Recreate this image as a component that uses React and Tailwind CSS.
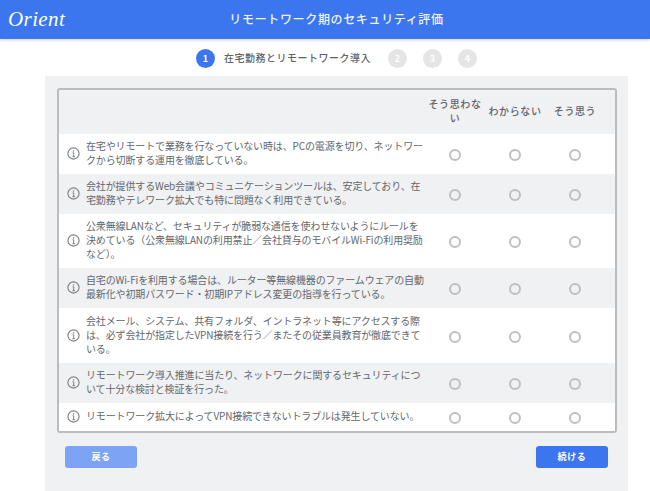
const FONT = "font-['Noto_Sans_CJK_JP','Noto_Sans',sans-serif]";
const rows = [
  { h: "h-[40px]", bg: "bg-white", t: "在宅やリモートで業務を行なっていない時は、PCの電源を切り、ネットワークから切断する運用を徹底している。" },
  { h: "h-[40px]", bg: "bg-[#f0f1f3]", t: "会社が提供するWeb会議やコミュニケーションツールは、安定しており、在宅勤務やテレワーク拡大でも特に問題なく利用できている。" },
  { h: "h-[54px]", bg: "bg-white", t: "公衆無線LANなど、セキュリティが脆弱な通信を使わせないようにルールを決めている（公衆無線LANの利用禁止／会社貸与のモバイルWi-Fiの利用奨励など）。" },
  { h: "h-[40px]", bg: "bg-[#f0f1f3]", t: "自宅のWi-Fiを利用する場合は、ルーター等無線機器のファームウェアの自動最新化や初期パスワード・初期IPアドレス変更の指導を行っている。" },
  { h: "h-[55px]", bg: "bg-white", t: "会社メール、システム、共有フォルダ、イントラネット等にアクセスする際は、必ず会社が指定したVPN接続を行う／またその従業員教育が徹底できている。" },
  { h: "h-[40px]", bg: "bg-[#f0f1f3]", t: "リモートワーク導入推進に当たり、ネットワークに関するセキュリティについて十分な検討と検証を行った。" },
  { h: "h-[28px]", bg: "bg-white", t: "リモートワーク拡大によってVPN接続できないトラブルは発生していない。" },
];

function Info() {
  return (
    <svg width="13" height="13" viewBox="0 0 13 13" fill="none" className="shrink-0 mb-[1px]">
      <circle cx="6.5" cy="6.5" r="5.6" stroke="#7a7e83" strokeWidth="1.1" />
      <path d="M5.6 5.8H6.7V9.6M5.4 9.7H8" stroke="#7a7e83" strokeWidth="1" />
      <circle cx="6.5" cy="3.9" r="0.75" fill="#7a7e83" />
    </svg>
  );
}

function Radio() {
  return <div className="w-[60px] flex justify-center pt-[2px]"><div className="w-3 h-3 rounded-full border-2 border-[#bfbfbf] bg-transparent" /></div>;
}

function Step({ n, active }) {
  return (
    <div className={`w-[19px] h-[19px] rounded-full flex items-center justify-center text-[9px] font-bold text-white ${active ? "bg-[#3b76ef]" : "bg-[#e5e5e5]"}`}>{n}</div>
  );
}

export default function App() {
  return (
    <div className={`${FONT} w-[650px] h-[491px] overflow-hidden bg-white flex flex-col`}>
      <header className="h-[39px] shrink-0 bg-[#3b76ef] shadow-[0_1px_3px_rgba(0,0,0,0.2)] relative flex items-center justify-center pl-[23px]">
        <span className="absolute left-[8px] top-[7px] font-['Liberation_Serif',serif] italic text-[21px] leading-[24px] tracking-[0.4px] text-white">Orient</span>
        <h1 className="mb-[2px] text-[12px] leading-[16px] font-medium tracking-[0.65px] text-[#eef3ff]">リモートワーク期のセキュリティ評価</h1>
      </header>
      <div className="h-[37px] shrink-0 flex items-center pl-[196px] pt-[2px]">
        <Step n="1" active />
        <span className="ml-[9px] mr-[17px] mb-[2px] text-[10px] leading-[14px] font-medium tracking-[0.5px] text-[#5f6368]">在宅勤務とリモートワーク導入</span>
        <div className="flex gap-[16px]"><Step n="2" /><Step n="3" /><Step n="4" /></div>
      </div>
      <main className="ml-[45px] w-[583px] flex-1 bg-[#f0f1f3] pt-[12px] px-[12px]">
        <div className="w-[560px] rounded-[3px] border-2 border-[#bcbcbc] overflow-hidden">
          <div className="h-[44px] flex items-center pl-[366px] pb-[2px] text-[10px] font-medium tracking-[0.6px] text-[#5f6368] text-center">
            <div className="w-[60px] leading-[14px]">そう思わない</div>
            <div className="w-[60px] leading-[14px]">わからない</div>
            <div className="w-[60px] leading-[14px]">そう思う</div>
          </div>
          {rows.map((r, i) => (
            <div key={i} className={`${r.h} ${r.bg} flex items-center`}>
              <div className="w-[366px] shrink-0 flex items-center pl-[8px]">
                <Info />
                <p className="ml-[6px] mb-[2px] w-[339px] text-[10px] leading-[14px] tracking-[-0.14px] text-[#63676c]">{r.t}</p>
              </div>
              <Radio /><Radio /><Radio />
            </div>
          ))}
        </div>
        <div className="flex justify-between mt-[13px] px-[8px]">
          <button className="w-[72px] h-[22px] rounded-[3px] bg-[#7ca3f4] text-white text-[9px] font-bold tracking-[0.6px]">戻る</button>
          <button className="w-[72px] h-[22px] rounded-[3px] bg-[#3b76ef] text-white text-[9px] font-bold tracking-[0.6px]">続ける</button>
        </div>
      </main>
    </div>
  );
}
